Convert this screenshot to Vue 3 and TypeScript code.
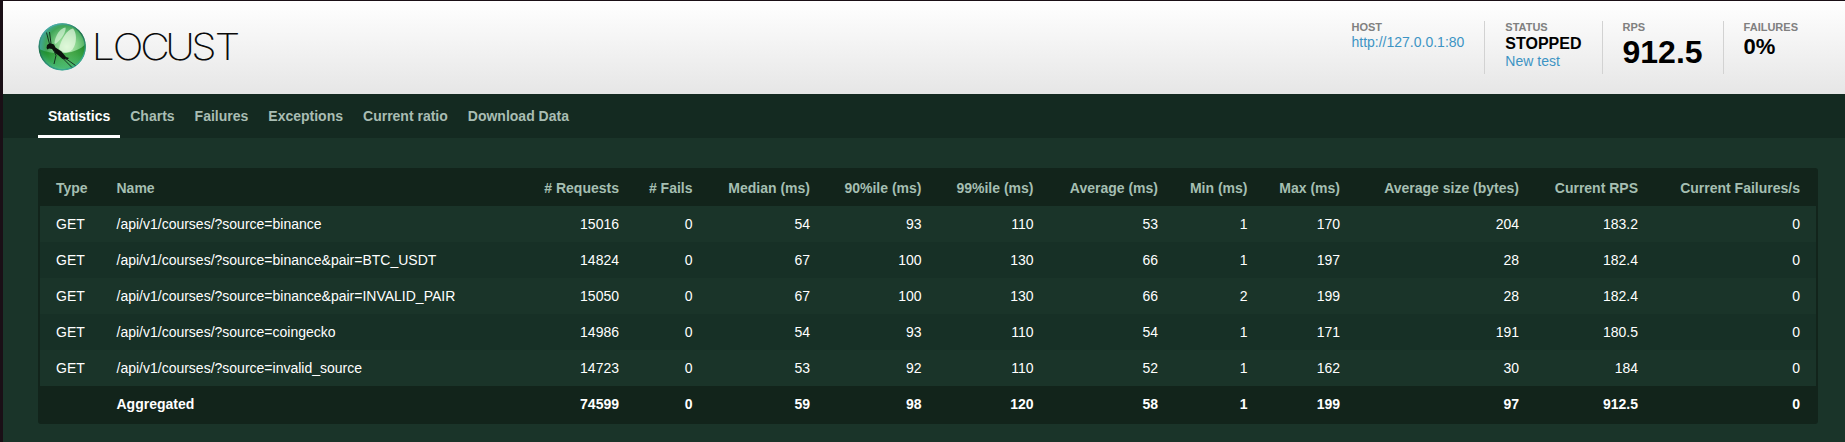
<script setup lang="ts">
interface Column { label: string; width: number; text?: boolean }

const tabs: string[] = ['Statistics', 'Charts', 'Failures', 'Exceptions', 'Current ratio', 'Download Data']

const columns: Column[] = [
  { label: 'Type', width: 60.5, text: true },
  { label: 'Name', width: 410.5, text: true },
  { label: '# Requests', width: 124 },
  { label: '# Fails', width: 73.5 },
  { label: 'Median (ms)', width: 117.5 },
  { label: '90%ile (ms)', width: 111.5 },
  { label: '99%ile (ms)', width: 112 },
  { label: 'Average (ms)', width: 124.5 },
  { label: 'Min (ms)', width: 89.5 },
  { label: 'Max (ms)', width: 92.5 },
  { label: 'Average size (bytes)', width: 179 },
  { label: 'Current RPS', width: 119 },
  { label: 'Current Failures/s', width: 162 },
]

const rows: string[][] = [
  ['GET', '/api/v1/courses/?source=binance', '15016', '0', '54', '93', '110', '53', '1', '170', '204', '183.2', '0'],
  ['GET', '/api/v1/courses/?source=binance&pair=BTC_USDT', '14824', '0', '67', '100', '130', '66', '1', '197', '28', '182.4', '0'],
  ['GET', '/api/v1/courses/?source=binance&pair=INVALID_PAIR', '15050', '0', '67', '100', '130', '66', '2', '199', '28', '182.4', '0'],
  ['GET', '/api/v1/courses/?source=coingecko', '14986', '0', '54', '93', '110', '54', '1', '171', '191', '180.5', '0'],
  ['GET', '/api/v1/courses/?source=invalid_source', '14723', '0', '53', '92', '110', '52', '1', '162', '30', '184', '0'],
]
const total: string[] = ['', 'Aggregated', '74599', '0', '59', '98', '120', '58', '1', '199', '97', '912.5', '0']
</script>

<template>
  <div class="page">
    <header class="top">
      <svg class="logo" width="206" height="52" viewBox="0 0 206 52">
        <defs>
          <radialGradient id="ball" cx="0.6" cy="0.5" r="0.56">
            <stop offset="0" stop-color="#c4f3bf" />
            <stop offset="0.4" stop-color="#85d28a" />
            <stop offset="0.8" stop-color="#40a558" />
            <stop offset="1" stop-color="#3fa590" />
          </radialGradient>
          <linearGradient id="shade" x1="0" y1="0" x2="0" y2="1">
            <stop offset="0" stop-color="#0b7410" stop-opacity="0.75" />
            <stop offset="0.4" stop-color="#158a1c" stop-opacity="0.6" />
            <stop offset="1" stop-color="#58cf8c" stop-opacity="0.6" />
          </linearGradient>
          <linearGradient id="rim" x1="0" y1="0" x2="0.5" y2="1">
            <stop offset="0" stop-color="#5cc6d0" />
            <stop offset="0.5" stop-color="#1f6f4c" />
            <stop offset="1" stop-color="#3aa994" />
          </linearGradient>
        </defs>
        <circle cx="24.200" cy="25.800" r="23.500" fill="url(#ball)" />
        <path d="M1 28C10 32 19 33 27 32C36 31 43 28 47.500 23A23.400 23.400 0 0 1 1 28Z" fill="url(#shade)" />
        <circle cx="24.200" cy="25.800" r="23" fill="none" stroke="url(#rim)" stroke-width="1.300" />
        <path d="M16.500 22C17 15 22 7 27.500 6.500C28.500 10 24 18 17.500 23Z" fill="#dff8df" opacity="0.65" />
        <path d="M21 28C23 18 29 8.500 35 7.500C40 13 38.500 28 31 31C27 32 23.500 31 21 28Z" fill="#effcea" opacity="0.65" />
        <path d="M8.500 27L9 24L12 22L16 23.500L17.500 26.500L23.500 30.500L28 36L31 37L29.500 38.500L24.500 38L20 34L16.500 31.500L14 28L11 27.500L9.500 28.500Z" fill="#0c120d" />
        <path d="M11.500 23L8.500 11.500M13 22.500L11.500 11M16 29.500L18 34.500L16 43M24 36.500L34 46.500M27 37L37.500 44.500" fill="none" stroke="#143021" stroke-width="1" />
        <text class="wordmark" transform="scale(1.1 1)" y="39" x="48.900 68 92.900 115.700 139.300 160.700">LOCUST</text>
      </svg>
      <div class="status">
        <div class="box"><b class="label">HOST</b><a class="link">http://127.0.0.1:80</a></div>
        <div class="box"><b class="label">STATUS</b><b class="state">STOPPED</b><a class="link">New test</a></div>
        <div class="box"><b class="label">RPS</b><b class="rps">912.5</b></div>
        <div class="box"><b class="label">FAILURES</b><b class="fail">0%</b></div>
      </div>
    </header>
    <nav class="tabs">
      <a v-for="(tab, i) in tabs" :key="tab" class="tab" :class="{ active: i === 0 }">{{ tab }}</a>
    </nav>
    <main class="content">
      <table class="stats">
        <colgroup>
          <col v-for="c in columns" :key="c.label" :style="{ width: c.width + 'px' }" />
        </colgroup>
        <thead>
          <tr><th v-for="c in columns" :key="c.label" :class="{ left: c.text }">{{ c.label }}</th></tr>
        </thead>
        <tbody>
          <tr v-for="(row, r) in rows" :key="r">
            <td v-for="(cell, i) in row" :key="i" :class="{ left: columns[i].text }">{{ cell }}</td>
          </tr>
        </tbody>
        <tfoot>
          <tr><td v-for="(cell, i) in total" :key="i" :class="{ left: columns[i].text }">{{ cell }}</td></tr>
        </tfoot>
      </table>
    </main>
  </div>
</template>

<style>
body { background: #1a3429; }
</style>

<style scoped>
.page {
  box-sizing: border-box;
  height: 442px;
  overflow: hidden;
  border-top: 1px solid #1a0f16;
  border-left: 3px solid #1a0f16;
  background: #1a3429;
  font: 14px/16px "Liberation Sans", Arial, sans-serif;
}
.top {
  box-sizing: border-box;
  display: flex;
  justify-content: space-between;
  height: 93px;
  padding: 20px 27px 0 35px;
  background: linear-gradient(#fff, #e6e6e6);
}
.logo { display: block; }
.wordmark { font: 200 37px "Inter", sans-serif; fill: #0a0a0a; }
.status { display: flex; height: 53px; }
.box {
  display: flex;
  flex-direction: column;
  align-items: flex-start;
  padding: 0 20px;
  border-left: 1px solid #d2d2d2;
}
.box:first-child { border-left: 0; }
.label { font-size: 11px; line-height: 13px; color: #808080; }
.link { line-height: 16px; color: #3d94c4; }
.state { font-size: 16px; line-height: 19px; }
.rps { font-size: 32px; line-height: 36px; }
.fail { font-size: 22px; line-height: 26px; }
.tabs { display: flex; height: 44px; padding-left: 35px; background: #142a21; }
.tab {
  box-sizing: border-box;
  height: 44px;
  padding: 14px 10px 0;
  font-weight: bold;
  color: #a9bdb3;
}
.tab.active { color: #fff; border-bottom: 3px solid #fff; }
.content { padding: 30px 27px 0 35px; }
.stats {
  width: 1780px;
  table-layout: fixed;
  border-collapse: separate;
  border-spacing: 0;
  border: 2px solid #12241b;
  border-radius: 3px;
  background: #12241b;
}
th, td { height: 36px; padding: 0 16px 0 8px; text-align: right; white-space: nowrap; color: #fff; }
th { color: #a5bfb2; }
.left { padding-left: 16px; text-align: left; }
tbody tr { background: #1a3429; }
tbody tr:nth-child(even) { background: #173026; }
tfoot td { font-weight: bold; }
</style>
